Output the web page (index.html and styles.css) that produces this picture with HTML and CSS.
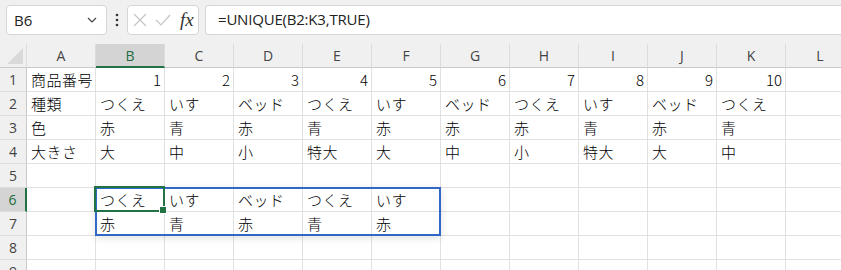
FILE: index.html
```html
<!DOCTYPE html>
<html lang="ja">
<head>
    <meta charset="UTF-8">
    <title>UNIQUE</title>
    <link rel="stylesheet" href="styles.css">
</head>
<body>
    <div class="toolbar">
        <div class="name-box">
            <span>B6</span>
            <svg class="chevron" width="10" height="6" viewBox="0 0 10 6"><path d="M1 1l4 4 4-4" fill="none" stroke="#444" stroke-width="1.2"/></svg>
        </div>
        <svg class="dots" width="4" height="14" viewBox="0 0 4 14"><circle cx="2" cy="2" r="1.3" fill="#333"/><circle cx="2" cy="7" r="1.3" fill="#333"/><circle cx="2" cy="12" r="1.3" fill="#333"/></svg>
        <div class="fx-box">
            <svg width="14" height="14" viewBox="0 0 14 14"><path d="M1 1l12 12M13 1L1 13" stroke="#c4c4c4" stroke-width="1.2"/></svg>
            <svg width="16" height="12" viewBox="0 0 16 12"><path d="M1 6l5 5 9-10" fill="none" stroke="#c4c4c4" stroke-width="1.2"/></svg>
            <span class="fx">fx</span>
        </div>
        <div class="formula">=UNIQUE(B2:K3,TRUE)</div>
    </div>

    <div class="sheet-wrap">
        <div class="sheet">
            <div class="h corner"><svg width="16" height="16" viewBox="0 0 16 16"><path d="M16 0V16H0z" fill="#d9d9d9"/></svg></div>
            <div class="h">A</div><div class="h sel">B</div><div class="h">C</div><div class="h">D</div><div class="h">E</div><div class="h">F</div>
            <div class="h">G</div><div class="h">H</div><div class="h">I</div><div class="h">J</div><div class="h">K</div><div class="h">L</div>

            <div class="r">1</div>
            <div class="c">商品番号</div><div class="c n">1</div><div class="c n">2</div><div class="c n">3</div><div class="c n">4</div><div class="c n">5</div>
            <div class="c n">6</div><div class="c n">7</div><div class="c n">8</div><div class="c n">9</div><div class="c n">10</div><div class="c"></div>

            <div class="r">2</div>
            <div class="c">種類</div><div class="c">つくえ</div><div class="c">いす</div><div class="c">ベッド</div><div class="c">つくえ</div><div class="c">いす</div>
            <div class="c">ベッド</div><div class="c">つくえ</div><div class="c">いす</div><div class="c">ベッド</div><div class="c">つくえ</div><div class="c"></div>

            <div class="r">3</div>
            <div class="c">色</div><div class="c">赤</div><div class="c">青</div><div class="c">赤</div><div class="c">青</div><div class="c">赤</div>
            <div class="c">赤</div><div class="c">赤</div><div class="c">青</div><div class="c">赤</div><div class="c">青</div><div class="c"></div>

            <div class="r">4</div>
            <div class="c">大きさ</div><div class="c">大</div><div class="c">中</div><div class="c">小</div><div class="c">特大</div><div class="c">大</div>
            <div class="c">中</div><div class="c">小</div><div class="c">特大</div><div class="c">大</div><div class="c">中</div><div class="c"></div>

            <div class="r">5</div>
            <div class="c"></div><div class="c"></div><div class="c"></div><div class="c"></div><div class="c"></div><div class="c"></div>
            <div class="c"></div><div class="c"></div><div class="c"></div><div class="c"></div><div class="c"></div><div class="c"></div>

            <div class="r sel">6</div>
            <div class="c"></div><div class="c">つくえ</div><div class="c">いす</div><div class="c">ベッド</div><div class="c">つくえ</div><div class="c">いす</div>
            <div class="c"></div><div class="c"></div><div class="c"></div><div class="c"></div><div class="c"></div><div class="c"></div>

            <div class="r">7</div>
            <div class="c"></div><div class="c">赤</div><div class="c">青</div><div class="c">赤</div><div class="c">青</div><div class="c">赤</div>
            <div class="c"></div><div class="c"></div><div class="c"></div><div class="c"></div><div class="c"></div><div class="c"></div>

            <div class="r">8</div>
            <div class="c"></div><div class="c"></div><div class="c"></div><div class="c"></div><div class="c"></div><div class="c"></div>
            <div class="c"></div><div class="c"></div><div class="c"></div><div class="c"></div><div class="c"></div><div class="c"></div>

            <div class="r">9</div>
            <div class="c"></div><div class="c"></div><div class="c"></div><div class="c"></div><div class="c"></div><div class="c"></div>
            <div class="c"></div><div class="c"></div><div class="c"></div><div class="c"></div><div class="c"></div><div class="c"></div>
        </div>

        <!-- spill range B6:F7 and active cell B6 -->
        <div class="spill"></div>
        <div class="active"><span class="handle"></span></div>
    </div>
</body>
</html>
```

FILE: styles.css
```css
body {
    margin: 0;
    width: 841px;
    height: 270px;
    overflow: hidden;
    background-color: #ffffff;
    font-family: "Noto Sans CJK JP", sans-serif;
    color: #000000;
}
.toolbar {
    height: 44px;
    box-sizing: border-box;
    background-color: #f0f0f0;
    display: flex;
    align-items: flex-start;
    padding: 5px 0 0 6px;
}
.name-box {
    width: 101px;
    height: 30px;
    box-sizing: border-box;
    background-color: #ffffff;
    border: 1px solid #d6d6d6;
    border-radius: 4px;
    display: flex;
    align-items: center;
    justify-content: space-between;
    padding: 0 9px 0 7px;
    font-family: "Open Sans", sans-serif;
    font-size: 15px;
    color: #222;
}
.dots {
    margin: 8px 8px 0 8px;
}
.fx-box {
    width: 72px;
    height: 30px;
    box-sizing: border-box;
    background-color: #ffffff;
    border: 1px solid #d6d6d6;
    border-radius: 4px;
    display: flex;
    align-items: center;
    gap: 8px;
    padding-left: 5px;
}
.fx {
    font-family: "Liberation Serif", serif;
    font-style: italic;
    font-size: 19px;
    color: #333;
    margin-left: 1px;
}
.formula {
    flex: 1;
    height: 30px;
    box-sizing: border-box;
    margin-left: 6px;
    background-color: #ffffff;
    border: 1px solid #d6d6d6;
    border-right: none;
    border-radius: 4px 0 0 4px;
    padding-left: 12px;
    line-height: 27px;
    font-family: "Open Sans", sans-serif;
    font-size: 15px;
    letter-spacing: -0.2px;
    color: #222;
}
.sheet-wrap {
    position: relative;
}
.sheet {
    display: grid;
    grid-template-columns: 27px repeat(12, 69px);
    grid-auto-rows: 24px;
}
.h, .r, .c {
    box-sizing: border-box;
    border-right: 1px solid #e1e1e1;
    border-bottom: 1px solid #e1e1e1;
}
.h {
    background-color: #f0f0f0;
    border-right-color: #dcdcdc;
    border-bottom-color: #c9c9c9;
    text-align: center;
    line-height: 23px;
    font-family: "Open Sans", sans-serif;
    font-size: 14px;
    color: #444;
}
.h.sel {
    background-color: #d4d4d4;
    color: #1e6d40;
    border-bottom: 2px solid #217346;
}
.corner {
    display: flex;
    align-items: flex-end;
    justify-content: flex-end;
    padding: 0 3px 3px 0;
}
.r {
    background-color: #f0f0f0;
    border-right-color: #c9c9c9;
    border-bottom-color: #dcdcdc;
    text-align: center;
    line-height: 23px;
    font-family: "Open Sans", sans-serif;
    font-size: 14px;
    color: #444;
}
.r.sel {
    background-color: #d4d4d4;
    color: #1e6d40;
    border-right: 2px solid #217346;
}
.c {
    padding: 0 4px;
    line-height: 23px;
    font-size: 15px;
    font-weight: 300;
    letter-spacing: 0.5px;
    white-space: nowrap;
    overflow: hidden;
}
.c.n {
    text-align: right;
    padding-right: 3px;
    letter-spacing: 0;
}
.spill {
    position: absolute;
    left: 95px;
    top: 143px;
    width: 346px;
    height: 49px;
    box-sizing: border-box;
    border: 2px solid #3168c6;
    box-shadow: 0 2px 8px rgba(0,0,0,0.12);
}
.active {
    position: absolute;
    left: 94px;
    top: 142px;
    width: 71px;
    height: 26px;
    box-sizing: border-box;
    border: 2px solid #217346;
}
.handle {
    position: absolute;
    right: -4px;
    bottom: -4px;
    width: 6px;
    height: 6px;
    background-color: #217346;
    border: 1px solid #ffffff;
}
```
